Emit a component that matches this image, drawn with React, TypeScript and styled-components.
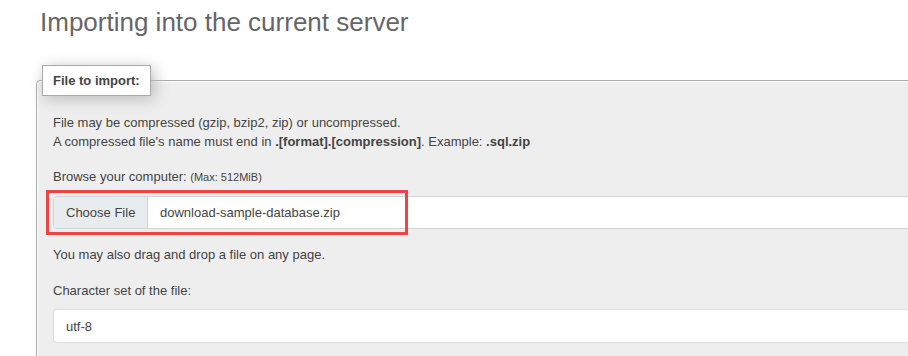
import React from "react";
import styled, { createGlobalStyle } from "styled-components";

const GlobalStyle = createGlobalStyle`
  html, body {
    margin: 0;
    padding: 0;
    background: #fff;
  }
  body {
    font-family: "Liberation Sans", Arial, sans-serif;
    font-size: 13px;
    color: #444;
    overflow: hidden;
  }
`;

const Page = styled.div`
  width: 908px;
  height: 356px;
  overflow: hidden;
  padding-top: 6px;
  box-sizing: border-box;
`;

const Heading = styled.h2`
  margin: 0 0 0 40px;
  font-size: 26px;
  line-height: 32px;
  font-weight: normal;
  color: #666;
`;

const Fieldset = styled.fieldset`
  margin: 27px 0 0 36px;
  width: 1100px;
  box-sizing: border-box;
  padding: 0 16px 20px 16px;
  border: 1px solid #aaa;
  border-radius: 4px 4px 0 0;
  background: #eee;
  box-shadow: 1px 1px 2px #fff inset;
`;

const Legend = styled.legend`
  margin-left: -11px;
  padding: 7px 10px;
  font-weight: bold;
  font-size: 13px;
  line-height: 15px;
  color: #444;
  background: #fff;
  border: 1px solid #aaa;
  box-shadow: 3px 3px 15px #bbb;
`;

const Text = styled.p<{ $top?: number }>`
  margin: ${(p) => p.$top ?? 0}px 0 0 0;
  line-height: 19px;
`;

const Small = styled.span`
  font-size: 11px;
`;

const FileRow = styled.div`
  position: relative;
  margin-top: 9px;
  display: flex;
  height: 33px;
  box-sizing: border-box;
  border: 1px solid #ced4da;
  border-radius: 4px;
  background: #fff;
`;

const ChooseButton = styled.div`
  display: flex;
  align-items: center;
  width: 94px;
  box-sizing: border-box;
  padding-left: 12px;
  background: #e9ecef;
  border-right: 1px solid #ced4da;
  border-radius: 3px 0 0 3px;
  color: #444;
`;

const FileName = styled.div`
  display: flex;
  align-items: center;
  padding-left: 12px;
  color: #444;
`;

const Highlight = styled.div`
  position: absolute;
  left: -8px;
  top: -7px;
  width: 362px;
  height: 45px;
  box-sizing: border-box;
  border: 3px solid #ef4444;
  pointer-events: none;
`;

const Select = styled.div`
  margin-top: 9px;
  display: flex;
  align-items: center;
  height: 34px;
  box-sizing: border-box;
  padding-left: 12px;
  border: 1px solid #ddd;
  border-radius: 4px;
  background: #fff;
  color: #444;
`;

export default function App() {
  return (
    <>
      <GlobalStyle />
      <Page>
        <Heading>Importing into the current server</Heading>
        <Fieldset>
          <Legend>File to import:</Legend>
          <Text $top={17}>
            File may be compressed (gzip, bzip2, zip) or uncompressed.
            <br />
            A compressed file's name must end in <b>.[format].[compression]</b>. Example: <b>.sql.zip</b>
          </Text>
          <Text $top={16}>
            Browse your computer: <Small>(Max: 512MiB)</Small>
          </Text>
          <FileRow>
            <ChooseButton>Choose File</ChooseButton>
            <FileName>download-sample-database.zip</FileName>
            <Highlight />
          </FileRow>
          <Text $top={16}>You may also drag and drop a file on any page.</Text>
          <Text $top={17}>Character set of the file:</Text>
          <Select>utf-8</Select>
        </Fieldset>
      </Page>
    </>
  );
}
